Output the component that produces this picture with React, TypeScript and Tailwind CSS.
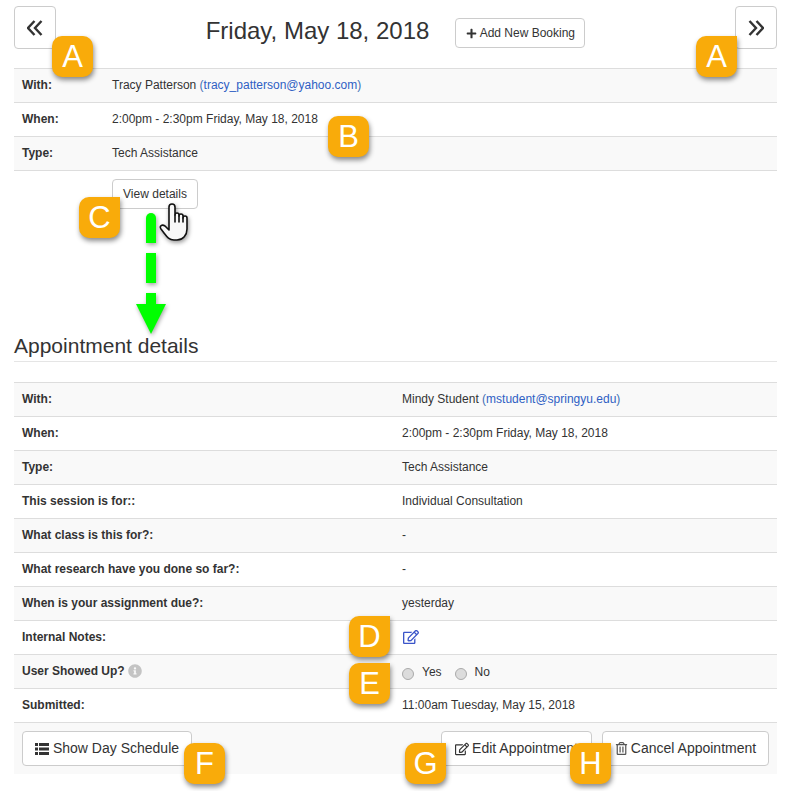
import type { ReactNode } from "react";
import { FaInfoCircle, FaPlus, FaRegEdit, FaRegTrashAlt } from "react-icons/fa";

type Row = { label: ReactNode; value: ReactNode };

function Email({ name, address }: { name: string; address: string }) {
  return (
    <>
      {name} <span className="text-[#3f6fb5]">(</span>
      <a className="text-[#2f5fc4]" href="#">
        {address}
      </a>
      <span className="text-[#3f6fb5]">)</span>
    </>
  );
}

function InfoTable({ rows, labelWidth }: { rows: Row[]; labelWidth: string }) {
  return (
    <div className="border-b border-[#ddd] text-[12px] text-[#333]">
      {rows.map((row, i) => (
        <div
          key={i}
          className={`flex h-[34px] items-center border-t border-[#ddd] pb-[2px] ${i % 2 === 0 ? "bg-[#f9f9f9]" : "bg-white"}`}
        >
          <div className={`${labelWidth} shrink-0 pl-2 font-bold`}>{row.label}</div>
          <div>{row.value}</div>
        </div>
      ))}
    </div>
  );
}

function Button({ children, className }: { children: ReactNode; className: string }) {
  return (
    <button className={`flex items-center justify-center rounded border border-[#ccc] bg-white text-[#333] ${className}`}>
      {children}
    </button>
  );
}

function Callout({ letter, className }: { letter: string; className: string }) {
  return (
    <div
      className={`absolute flex h-[41px] w-[41px] items-center justify-center bg-[#f9ab0a] text-[31px] leading-none text-white shadow-[1px_3px_5px_rgba(0,0,0,0.45)] ${className}`}
    >
      {letter}
    </div>
  );
}

function Radio({ label }: { label: string }) {
  return (
    <span className="flex items-center">
      <span className="mt-[6px] h-[12px] w-[12px] rounded-full border border-[#aaa] bg-[#dcdcdc]" />
      <span className="ml-2 mt-[2px]">{label}</span>
    </span>
  );
}

function DoubleChevron({ flip }: { flip?: boolean }) {
  return (
    <svg width="16" height="16" viewBox="0 0 16 16" fill="none" stroke="#333" strokeWidth="2.4" className={flip ? "rotate-180" : ""}>
      <path d="M7.5 1 1 8l6.5 7" />
      <path d="M14.5 1 8 8l6.5 7" />
    </svg>
  );
}

function ListIcon() {
  return (
    <svg width="14" height="12" viewBox="0 0 14 12" fill="#333">
      <path d="M0 0h3v3H0zM4 0h10v3H4zM0 4.5h3v3H0zM4 4.5h10v3H4zM0 9h3v3H0zM4 9h10v3H4z" />
    </svg>
  );
}

const topRows: Row[] = [
  { label: "With:", value: <Email name="Tracy Patterson" address="tracy_patterson@yahoo.com" /> },
  { label: "When:", value: "2:00pm - 2:30pm Friday, May 18, 2018" },
  { label: "Type:", value: "Tech Assistance" }
];

const detailRows: Row[] = [
  { label: "With:", value: <Email name="Mindy Student" address="mstudent@springyu.edu" /> },
  { label: "When:", value: "2:00pm - 2:30pm Friday, May 18, 2018" },
  { label: "Type:", value: "Tech Assistance" },
  { label: "This session is for::", value: "Individual Consultation" },
  { label: "What class is this for?:", value: "-" },
  { label: "What research have you done so far?:", value: "-" },
  { label: "When is your assignment due?:", value: "yesterday" },
  { label: "Internal Notes:", value: <FaRegEdit className="ml-px text-[16px] text-[#3b55c9]" /> },
  {
    label: (
      <span className="flex items-center gap-[3px]">
        User Showed Up? <FaInfoCircle className="text-[14px] text-[#c4c4c4]" />
      </span>
    ),
    value: (
      <span className="flex gap-[13px]">
        <Radio label="Yes" />
        <Radio label="No" />
      </span>
    )
  },
  { label: "Submitted:", value: "11:00am Tuesday, May 15, 2018" }
];

export default function App() {
  return (
    <div className="relative h-[791px] overflow-hidden bg-white pl-[14px] pr-[16px] pt-[6px] font-['Liberation_Sans',Arial,sans-serif] text-[#333]">
      <div className="flex items-start justify-between">
        <Button className="h-[43px] w-[42px]">
          <DoubleChevron />
        </Button>
        <div className="flex items-start gap-[26px] pt-[10px]">
          <h1 className="text-[24px] leading-[30px]">Friday, May 18, 2018</h1>
          <Button className="mt-[2px] h-[30px] w-[130px] gap-[3px] text-[12px]">
            <FaPlus className="text-[11px]" />
            Add New Booking
          </Button>
        </div>
        <Button className="h-[43px] w-[42px]">
          <DoubleChevron flip />
        </Button>
      </div>

      <div className="mt-[19px]">
        <InfoTable rows={topRows} labelWidth="w-[98px]" />
      </div>
      <div className="ml-[98px] mt-[8px]">
        <Button className="h-[30px] w-[86px] text-[12px]">View details</Button>
      </div>

      <h2 className="mt-[123px] h-[30px] border-b border-[#e5e5e5] text-[21px] leading-[28px]">Appointment details</h2>

      <div className="mt-[20px]">
        <InfoTable rows={detailRows} labelWidth="w-[388px]" />
      </div>
      <div className="flex h-[51px] items-start justify-between bg-[#f9f9f9] px-2 pt-2">
        <Button className="h-[35px] w-[170px] gap-1 text-[14px]">
          <ListIcon />
          Show Day Schedule
        </Button>
        <div className="flex gap-[10px]">
          <Button className="h-[35px] w-[151px] gap-[3px] text-[14px]">
            <FaRegEdit className="text-[14px]" />
            Edit Appointment
          </Button>
          <Button className="h-[35px] w-[167px] gap-[3px] text-[14px]">
            <FaRegTrashAlt className="text-[13px] text-[#555]" />
            Cancel Appointment
          </Button>
        </div>
      </div>

      <svg
        className="absolute left-[132px] top-[210px] drop-shadow-[1px_2px_2px_rgba(0,0,0,0.35)]"
        width="38"
        height="126"
        viewBox="0 0 38 126"
      >
        <path d="M14 8a5 5 0 0 1 10 0v25H14z" fill="#00ff00" />
        <rect x="14" y="43" width="10" height="30" fill="#00ff00" />
        <path d="M14 83h10v11h10l-15 30-15-30h10z" fill="#00ff00" />
      </svg>
      <svg
        className="absolute left-[159px] top-[203px] drop-shadow-[1px_2px_2px_rgba(0,0,0,0.4)]"
        width="30"
        height="38"
        viewBox="0 0 30 38"
        stroke="#111"
        strokeWidth="1.6"
        strokeLinejoin="round"
        strokeLinecap="round"
      >
        <path
          d="M10 21V4a3 3 0 0 1 6 0v8a2 2 0 0 1 4 0v1a2 2 0 0 1 4 0v2a2 2 0 0 1 4 0v11c0 6-4 11-10 11h-3c-5 0-7-3-10-7l-3-4c-2-3 1-5 4-3l4 4z"
          fill="#f8f8f8"
        />
        <path d="M16 12v7M20 13v6M24 15v4" fill="none" />
      </svg>

      <Callout letter="A" className="left-[52px] top-[36px] rounded-[10px]" />
      <Callout letter="A" className="left-[696px] top-[36px] rounded-[10px] rounded-tr-none" />
      <Callout letter="B" className="left-[328px] top-[116px] rounded-[10px]" />
      <Callout letter="C" className="left-[79px] top-[197px] rounded-[10px] rounded-tr-none" />
      <Callout letter="D" className="left-[349px] top-[616px] rounded-[10px] rounded-tr-none" />
      <Callout letter="E" className="left-[349px] top-[663px] rounded-[10px] rounded-tr-none" />
      <Callout letter="F" className="left-[184px] top-[743px] rounded-[10px]" />
      <Callout letter="G" className="left-[405px] top-[743px] rounded-[10px] rounded-tr-none" />
      <Callout letter="H" className="left-[570px] top-[743px] rounded-[10px] rounded-tr-none" />
    </div>
  );
}
